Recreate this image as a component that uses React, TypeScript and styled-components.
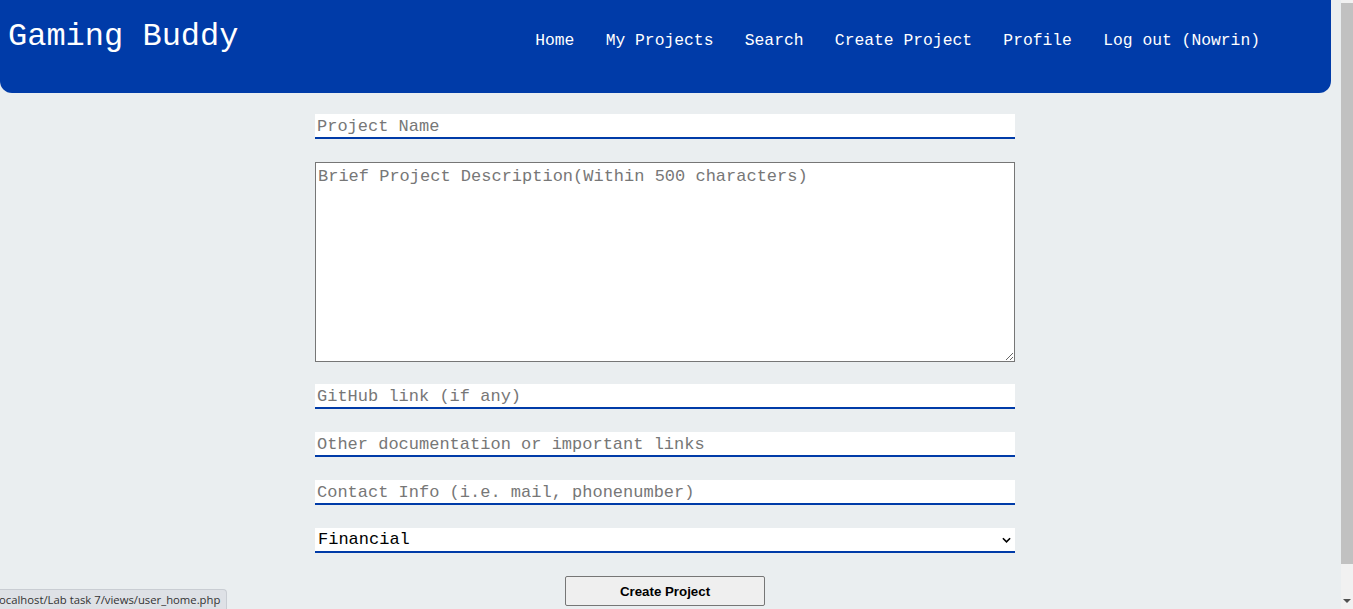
import styled, { createGlobalStyle } from "styled-components"

const GlobalStyle = createGlobalStyle`
  html, body {
    margin: 0;
    padding: 0;
    height: 100%;
    overflow: hidden;
    background: #eaeef0;
  }
  #root {
    height: 100%;
  }
`

const categories = ["Financial", "Educational", "Entertainment", "Health", "Other"]
const navLinks = ["Home", "My Projects", "Search", "Create Project", "Profile", "Log out (Nowrin)"]

export default function App() {
  return (
    <>
      <GlobalStyle />
      <Screen>
        <Page>
          <Header>
            <Brand>Gaming Buddy</Brand>
            <Nav>
              {navLinks.map((l) => (
                <NavLink key={l} href="#">
                  {l}
                </NavLink>
              ))}
            </Nav>
          </Header>
          <Form onSubmit={(e) => e.preventDefault()}>
            <LineInput placeholder="Project Name" />
            <TextBox placeholder="Brief Project Description(Within 500 characters)" />
            <LineInput placeholder="GitHub link (if any)" />
            <LineInput placeholder="Other documentation or important links" />
            <LineInput placeholder="Contact Info (i.e. mail, phonenumber)" />
            <SelectWrap>
              <Select defaultValue="Financial">
                {categories.map((c) => (
                  <option key={c}>{c}</option>
                ))}
              </Select>
              <Chevron viewBox="0 0 10 6">
                <path d="M1 1l4 4 4-4" fill="none" stroke="#000" strokeWidth="1.8" />
              </Chevron>
            </SelectWrap>
            <SubmitBtn type="submit">Create Project</SubmitBtn>
          </Form>
        </Page>
        <ScrollTrack>
          <ScrollThumb />
          <ScrollArrow />
        </ScrollTrack>
      </Screen>
      <StatusTip>ocalhost/Lab task 7/views/user_home.php</StatusTip>
    </>
  )
}

const Screen = styled.div`
  display: flex;
  height: 100%;
`

const Page = styled.div`
  flex: 1;
  padding-right: 11px;
`

const Header = styled.header`
  height: 93px;
  margin-right: -1px;
  background: #003ba8;
  border-radius: 0 0 12px 12px;
  display: flex;
  align-items: flex-start;
  justify-content: space-between;
  padding: 0 71px 0 8px;
  box-sizing: border-box;
`

const Brand = styled.h1`
  margin: 14px 0 0;
  font-family: "Liberation Mono", "DejaVu Sans Mono", monospace;
  font-size: 32px;
  font-weight: normal;
  line-height: 46px;
  color: #fff;
`

const Nav = styled.nav`
  display: flex;
  gap: 31.3px;
  margin-top: 31px;
`

const NavLink = styled.a`
  font-family: "Liberation Mono", "DejaVu Sans Mono", monospace;
  font-size: 16.33px;
  line-height: 20px;
  color: #fff;
  text-decoration: none;
  white-space: nowrap;
`

const Form = styled.form`
  width: 700px;
  margin: 21px auto 0;
  display: flex;
  flex-direction: column;
  gap: 23px;
`

const fieldFont = `
  font-family: "Liberation Mono", "DejaVu Sans Mono", monospace;
  font-size: 17px;
`

const LineInput = styled.input`
  ${fieldFont}
  display: block;
  height: 25px;
  box-sizing: border-box;
  border: none;
  border-bottom: 2px solid #003ba8;
  background: #fff;
  padding: 1px 2px 0;
  margin: 0;
  color: #000;
  outline: none;
  &::placeholder {
    color: #777;
  }
`

const TextBox = styled.textarea`
  ${fieldFont}
  display: block;
  height: 200px;
  box-sizing: border-box;
  border: 1px solid #767676;
  background: #fff;
  padding: 4px 2px 3px;
  margin: 0 0 -1px;
  resize: vertical;
  outline: none;
  &::placeholder {
    color: #777;
  }
`

const SelectWrap = styled.div`
  position: relative;
  height: 25px;
`

const Select = styled.select`
  ${fieldFont}
  display: block;
  appearance: none;
  width: 100%;
  height: 25px;
  margin: 0;
  box-sizing: border-box;
  border: none;
  border-bottom: 2px solid #003ba8;
  border-radius: 0;
  background: #fff;
  color: #000;
  padding: 0 3px;
  outline: none;
`

const Chevron = styled.svg`
  position: absolute;
  right: 4px;
  top: 9px;
  width: 9px;
  height: 6px;
  pointer-events: none;
`

const SubmitBtn = styled.button`
  align-self: center;
  width: 200px;
  height: 30px;
  margin: 0;
  background: #efefef;
  border: 1px solid #767676;
  border-radius: 2px;
  font-family: "Liberation Sans", Arial, sans-serif;
  font-size: 13.3px;
  font-weight: bold;
  color: #000;
`

const ScrollTrack = styled.div`
  width: 12px;
  background: #f1f1f1;
  display: flex;
  flex-direction: column;
  padding-top: 3px;
  box-sizing: border-box;
`

const ScrollThumb = styled.div`
  height: 561px;
  background: #c1c1c1;
`

const ScrollArrow = styled.div`
  margin: auto auto 6px;
  width: 0;
  height: 0;
  border-left: 4px solid transparent;
  border-right: 4px solid transparent;
  border-top: 4px solid #505050;
`

const StatusTip = styled.div`
  position: fixed;
  left: -2px;
  bottom: 0;
  height: 19px;
  padding: 0 6px 0 0;
  background: #dee1e6;
  border: 1px solid #c9cdd3;
  border-bottom: none;
  border-radius: 0 4px 0 0;
  font-family: "Open Sans", "Liberation Sans", sans-serif;
  font-size: 11.3px;
  line-height: 20px;
  color: #333;
`
